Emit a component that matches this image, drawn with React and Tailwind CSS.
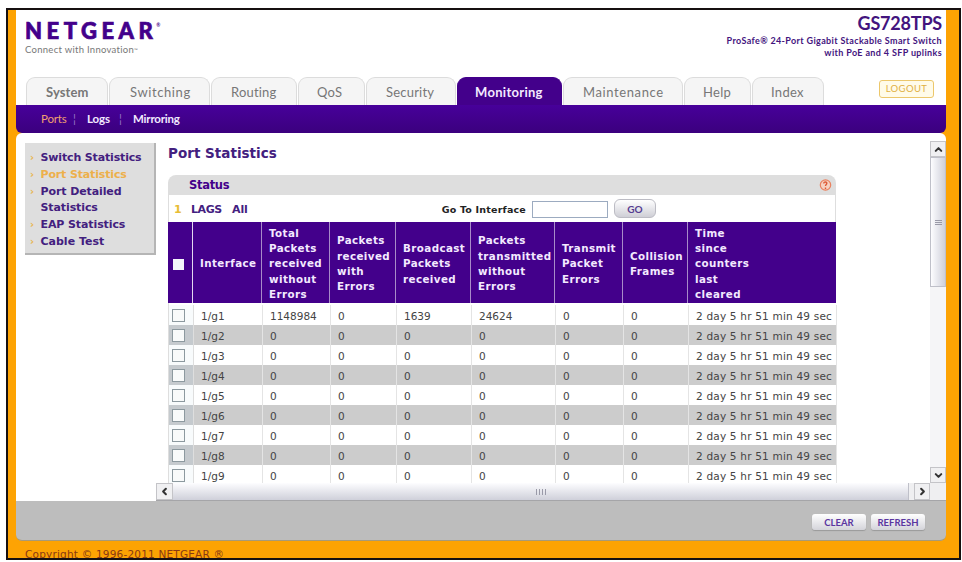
import clsx from "clsx";
import { ChevronUp, ChevronDown, ChevronLeft, ChevronRight } from "lucide-react";

const tabs = [
  { label: "System", width: "w-[82px]", pad: "pl-[19px]", track: "tracking-[0.1px]", bold: true },
  { label: "Switching", width: "w-[101px]", pad: "pl-5", track: "tracking-[0.6px]" },
  { label: "Routing", width: "w-[86px]", pad: "pl-[19px]", track: "tracking-[0.2px]" },
  { label: "QoS", width: "w-[67px]", pad: "pl-[18px]", track: "tracking-[0.3px]" },
  { label: "Security", width: "w-[90px]", pad: "pl-[19px]", track: "tracking-[0.2px]" },
  { label: "Monitoring", width: "w-[105px]", pad: "pl-[17px]", track: "tracking-[0.3px]", active: true },
  { label: "Maintenance", width: "w-[120px]", pad: "pl-[19px]", track: "tracking-[0.6px]" },
  { label: "Help", width: "w-[67px]", pad: "pl-[18px]", track: "tracking-[0.3px]" },
  { label: "Index", width: "w-[72px]", pad: "pl-[18px]", track: "tracking-[0.3px]" },
];

const menu = [
  { label: "Switch Statistics", track: "tracking-[-0.15px]" },
  { label: "Port Statistics", active: true, track: "tracking-[-0.15px]" },
  { label: "Port Detailed Statistics", track: "tracking-[-0.1px]" },
  { label: "EAP Statistics", track: "tracking-[-0.1px]" },
  { label: "Cable Test", track: "tracking-[0px]" },
];

const headers = [
  ["Interface"],
  ["Total", "Packets", "received", "without", "Errors"],
  ["Packets", "received", "with", "Errors"],
  ["Broadcast", "Packets", "received"],
  ["Packets", "transmitted", "without", "Errors"],
  ["Transmit", "Packet", "Errors"],
  ["Collision", "Frames"],
  ["Time", "since", "counters", "last", "cleared"],
];

const uptime = "2 day 5 hr 51 min 49 sec";
const rows = Array.from({ length: 9 }, (_, i) => [
  `1/g${i + 1}`,
  i === 0 ? "1148984" : "0",
  "0",
  i === 0 ? "1639" : "0",
  i === 0 ? "24624" : "0",
  "0",
  "0",
  uptime,
]);

const grid = "grid grid-cols-[25px_69px_68px_66px_75px_84px_68px_65px_148px]";

function Tab({ tab }) {
  return (
    <div
      className={clsx(
        "h-7 shrink-0 rounded-t-[9px] border-x border-t pt-[5px] text-[13px] leading-[18px] whitespace-nowrap",
        tab.width,
        tab.pad,
        tab.track,
        tab.active
          ? "border-[#43008b] bg-[#43008b] font-bold text-[#f3eaff]"
          : "border-[#dcdcdc] bg-[#f5f5f5] text-[#777]",
        tab.bold && "font-bold"
      )}
    >
      {tab.label}
    </div>
  );
}

function ScrollButton({ icon: Icon, className }) {
  return (
    <div className={clsx("flex items-center justify-center border border-[#c4c4c8] bg-[#f0f0f2] text-[#333]", className)}>
      <Icon size={11} strokeWidth={4.5} />
    </div>
  );
}

function Header() {
  return (
    <header className="flex h-[67px] shrink-0 justify-between bg-white pr-[4px] pl-[9px] font-['Lato',sans-serif]">
      <div>
        <div className="mt-[9px] flex text-[#43008b]">
          <span className="text-[22px] leading-[24px] font-black tracking-[4.5px] [-webkit-text-stroke:0.7px_#43008b]">
            NETGEAR
          </span>
          <span className="-ml-px text-[5px] leading-[12px] font-bold">®</span>
        </div>
        <div className="mt-[1px] text-[9.5px] leading-[12px] tracking-[0.28px] text-[#777]">
          Connect with Innovation<span className="align-top text-[5px]">™</span>
        </div>
      </div>
      <div className="text-right font-bold text-[#43147e]">
        <div className="mt-[3px] text-[18px] leading-[20px] tracking-[-0.2px]">GS728TPS</div>
        <div className="mt-[2px] text-[9px] leading-[12px] tracking-[0.36px]">
          ProSafe® 24-Port Gigabit Stackable Smart Switch
          <br />
          with PoE and 4 SFP uplinks
        </div>
      </div>
    </header>
  );
}

function TableRow({ cells, index }) {
  const shaded = index % 2 === 1;
  return (
    <div className={clsx(grid, "h-5 text-[10.5px] leading-[22px] text-[#444]", shaded ? "bg-[#cccccc]" : "bg-white")}>
      <div
        className={clsx(
          "flex h-5 items-center border-r border-[#dedede] pl-[3px]",
          shaded ? "bg-[#c5cace]" : "bg-[#f8fbfc]"
        )}
      >
        <span className="size-[13px] border border-[#8c999f] bg-[#f8fafa]" />
      </div>
      {cells.map((c, i) => (
        <div
          key={i}
          className={clsx(
            "h-5 border-r border-[#e4e4e4] pl-[7px] whitespace-nowrap",
            i === 7 && "tracking-[0.2px]"
          )}
        >
          {c}
        </div>
      ))}
    </div>
  );
}

function StatusPanel() {
  return (
    <div className="w-[668px]">
      <div className="flex h-5 items-center rounded-t-[8px] bg-[#dedede] pr-[4px] pl-[21px]">
        <span className="pt-[1px] text-[11.5px] font-bold tracking-[-0.3px] text-[#43008b]">Status</span>
        <svg className="ml-auto" width="13" height="14" viewBox="0 0 13 14" fill="none">
          <circle cx="6.5" cy="7" r="5.2" fill="#f6d2c2" stroke="#e98260" strokeWidth="1.2" />
          <path d="M4.8 5.4C4.8 3.4 8 3.6 7.8 5.4C7.7 6.5 6.5 6.6 6.5 8M6.5 9.4V11" stroke="#dd5a36" strokeWidth="1.4" />
        </svg>
      </div>
      <div className="flex h-[27px] items-center border-x border-[#dedede] bg-white pt-[3px] text-[11px] font-bold text-[#43207f]">
        <span className="ml-[5px] w-[17px] text-[#e8bd35]">1</span>
        <span className="w-[41px] tracking-[-0.4px]">LAGS</span>
        <span className="tracking-[-0.1px]">All</span>
        <span className="ml-auto text-[9.5px] tracking-[0.2px] text-[#222]">Go To Interface</span>
        <span className="mt-[-2px] ml-[6px] h-[17px] w-[76px] border border-[#9cabc0] bg-white" />
        <span className="mt-[-4px] mr-[179px] ml-[6px] flex h-[19px] w-[42px] items-center justify-center rounded-[6px] border border-[#bcbcc4] bg-gradient-to-b from-white to-[#cfcfd6] pt-[2px] font-['Lato',sans-serif] text-[10px] text-[#563d91]">
          GO
        </span>
      </div>
      <div
        className={clsx(
          grid,
          "h-[81px] bg-[#43008b] text-[10.3px] leading-[15.3px] font-bold tracking-[0.42px] text-[#f3e9ff]"
        )}
      >
        <div className="flex items-center border-r border-[#e4d7f0] pt-[3px] pl-[5px]">
          <span className="size-[11px] bg-[#f4f5fb]" />
        </div>
        {headers.map((lines, i) => (
          <div
            key={i}
            className={clsx(
              "flex flex-col justify-center pt-[3px] pl-[7px] whitespace-nowrap",
              i < 7 && "border-r border-[#a88bc9]"
            )}
          >
            {lines.map((line) => (
              <span key={line}>{line}</span>
            ))}
          </div>
        ))}
      </div>
      <div className="border-l border-[#dedede] pt-[2px]">
        {rows.map((r, i) => (
          <TableRow key={r[0]} cells={r} index={i} />
        ))}
      </div>
    </div>
  );
}

export default function App() {
  return (
    <div className="h-[562px] w-[962px] overflow-hidden bg-white pt-2 pl-[6px] font-['DejaVu_Sans',sans-serif]">
      <div className="flex h-[552px] w-[955px] flex-col overflow-hidden border-2 border-[#161010] bg-[#fda303] pr-[13px] pl-2">
        <Header />
        <nav className="flex h-7 shrink-0 items-end gap-[1px] bg-white pl-[10px] font-['Lato',sans-serif]">
          {tabs.map((t) => (
            <Tab key={t.label} tab={t} />
          ))}
          <div className="mb-[7px] ml-[54px] flex h-[18px] w-[55px] shrink-0 items-center justify-center rounded-[3px] border border-[#ecc76b] bg-[#fffbe9] text-[9.5px] tracking-[0.4px] text-[#dfb043]">
            LOGOUT
          </div>
        </nav>
        <div className="flex h-7 shrink-0 items-center rounded-b-[6px] bg-gradient-to-b from-[#47009a] to-[#3b007e] pb-[1px] pl-[25px] font-['Lato',sans-serif] text-[11.5px] font-bold text-[#f2eaff]">
          <span className="w-[32px] font-normal tracking-[-0.2px] text-[#f0a070]">Ports</span>
          <span className="w-[14px] font-normal text-[#9a78c8]">¦</span>
          <span className="w-[32px] tracking-[-0.1px]">Logs</span>
          <span className="w-[14px] font-normal text-[#9a78c8]">¦</span>
          <span className="tracking-[-0.2px]">Mirroring</span>
        </div>

        <div className="flex h-[368px] shrink-0 rounded-t-[6px] bg-white">
          <aside className="mt-[10px] ml-[9px] h-[112px] w-[131px] shrink-0 border-r-2 border-b-2 border-[#b5b5b5] bg-[#dedede] pt-[7px] pl-[5px]">
            {menu.map((m) => (
              <div
                key={m.label}
                className={clsx(
                  "flex text-[11px] leading-[16.8px] font-bold",
                  m.track,
                  m.active ? "text-[#edb04b]" : "text-[#43207f]"
                )}
              >
                <span className="w-[10.5px] shrink-0 text-[10px] text-[#e8b54d]">›</span>
                <span className="w-[110px]">{m.label}</span>
              </div>
            ))}
          </aside>
          <div className="flex min-w-0 flex-1 flex-col">
            <div className="flex h-[350px]">
              <main className="flex-1 overflow-hidden pl-[12px]">
                <h1 className="mt-[11px] mb-[13px] text-[13.5px] leading-[18px] font-bold tracking-[0.02px] text-[#43207f]">
                  Port Statistics
                </h1>
                <StatusPanel />
              </main>
              <div className="mt-[8px] flex w-4 flex-col bg-[#f5f5f7]">
                <ScrollButton icon={ChevronUp} className="h-[16px] w-full" />
                <div className="flex h-[130px] flex-col items-center justify-center gap-[1px] border border-[#bfc0c9] bg-gradient-to-r from-[#fdfdff] to-[#cfd0da]">
                  <span className="h-px w-[7px] bg-[#9a9aa8]" />
                  <span className="h-px w-[7px] bg-[#9a9aa8]" />
                  <span className="h-px w-[7px] bg-[#9a9aa8]" />
                </div>
                <ScrollButton icon={ChevronDown} className="mt-auto h-[16px] w-full" />
              </div>
            </div>
            <div className="flex h-[18px] border-b border-[#a5a5a8] bg-[#efeff1]">
              <ScrollButton icon={ChevronLeft} className="w-[17px]" />
              <div className="flex w-[736px] items-center justify-center gap-[2px] border-r border-[#bfc0c9] bg-gradient-to-b from-[#fdfdff] to-[#cfd0da]">
                <span className="h-[6px] w-px bg-[#9a9aa8]" />
                <span className="h-[6px] w-px bg-[#9a9aa8]" />
                <span className="h-[6px] w-px bg-[#9a9aa8]" />
                <span className="h-[6px] w-px bg-[#9a9aa8]" />
              </div>
              <ScrollButton icon={ChevronRight} className="ml-[5px] w-[16px]" />
            </div>
          </div>
        </div>

        <div className="flex h-[40px] shrink-0 items-start justify-end gap-[5px] rounded-b-[6px] border-b border-[#a89a78] bg-[#bdbdbd] pt-[13px] pr-[21px] font-['Lato',sans-serif] text-[9.5px] font-bold text-[#5a35a0]">
          <div className="flex h-[16px] w-[54px] items-center justify-center rounded-[3px] bg-gradient-to-b from-white to-[#d4d4da] pt-[3px] shadow-[0_1px_1px_#999]">
            CLEAR
          </div>
          <div className="flex h-[16px] w-[54px] items-center justify-center rounded-[3px] bg-gradient-to-b from-white to-[#d4d4da] pt-[3px] shadow-[0_1px_1px_#999]">
            REFRESH
          </div>
        </div>
        <footer className="mt-[6px] ml-[9px] text-[10.5px] leading-[14px] tracking-[0.2px] whitespace-nowrap text-[#8a3a14]">
          Copyright © 1996-2011 NETGEAR ®
        </footer>
      </div>
    </div>
  );
}
